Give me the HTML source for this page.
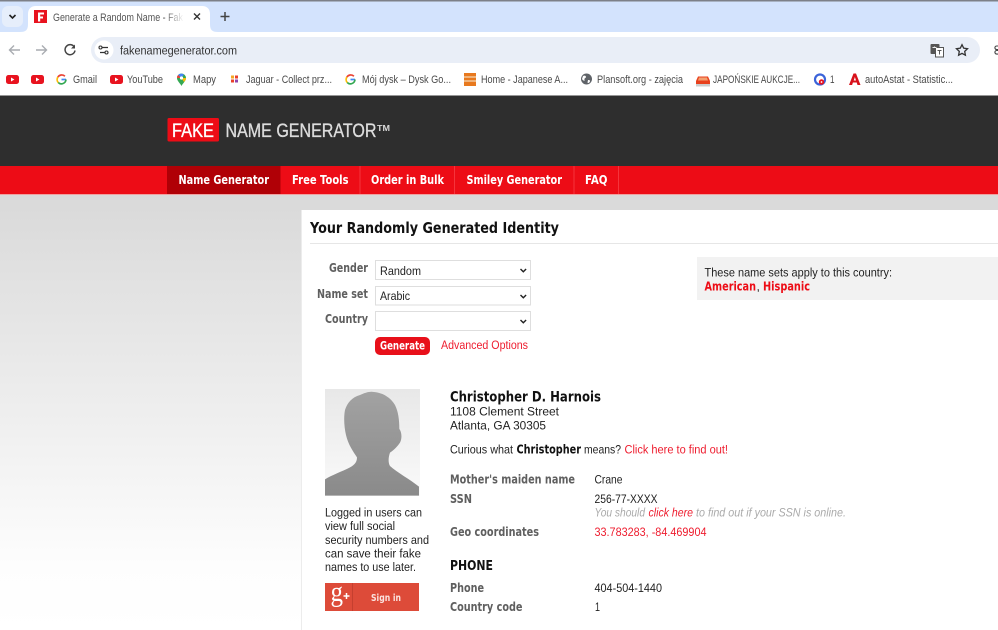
<!DOCTYPE html>
<html><head><meta charset="utf-8"><title>Fake Name Generator</title>
<style>
html,body{margin:0;padding:0;background:#fff;overflow:hidden}
svg{display:block}
text{font-family:"Liberation Sans",sans-serif;font-size:12.3px;fill:#222;white-space:pre}
.bm{font-size:10.600px;fill:#4a4a4a}
.nav{font-family:"DejaVu Sans",sans-serif;font-size:12px;font-weight:bold;fill:#fff}
.lb{font-family:"DejaVu Sans",sans-serif;font-size:12px;font-weight:bold;fill:#5f5f5f}
.v{font-size:12.300px;fill:#222}
.r{fill:#ee1c2e}
.b{font-family:"DejaVu Sans",sans-serif;font-size:12px;font-weight:bold}
.i{font-style:italic;font-size:11.500px;fill:#aaa}
.lg{font-family:"Liberation Sans",sans-serif;font-size:19.500px;stroke-width:.35px}
</style></head><body>
<svg width="998" height="630" viewBox="0 0 998 630" xmlns="http://www.w3.org/2000/svg">
<defs>
<linearGradient id="bg" x1="0" y1="0" x2="0" y2="1"><stop offset="0" stop-color="#d9d9d9"/><stop offset="0.85" stop-color="#fdfdfd"/><stop offset="1" stop-color="#fff"/></linearGradient>
<linearGradient id="ph" x1="0" y1="0" x2="0" y2="1"><stop offset="0" stop-color="#e8e8e8"/><stop offset="1" stop-color="#fafafa"/></linearGradient>
<linearGradient id="si" x1="0" y1="0" x2="0" y2="1"><stop offset="0" stop-color="#a2a2a2"/><stop offset="1" stop-color="#8a8a8a"/></linearGradient>
<linearGradient id="fade" x1="0" y1="0" x2="1" y2="0"><stop offset="0" stop-color="#fff" stop-opacity="0"/><stop offset="1" stop-color="#fff"/></linearGradient>
</defs>

<!-- browser chrome -->
<rect width="998" height="96" fill="#fff"/>
<rect width="998" height="32" fill="#d3e3fd"/>
<rect width="998" height="1.5" fill="#7d8088"/>
<rect x="2" y="6" width="21" height="21" rx="6" fill="#e6eefb"/>
<path d="M9.5 15l3 3 3-3" fill="none" stroke="#222" stroke-width="1.6"/>
<path d="M20 32c6 0 8-2 8-8V14c0-5 3-8 8-8h166c5 0 8 3 8 8v10c0 6 2 8 8 8z" fill="#fff"/>
<rect x="34" y="10" width="13" height="13" fill="#e8131f"/>
<path d="M38 12.5h6v2h-3.8v2H43v2h-2.8v3H38z" fill="#fff"/>
<text x="53" y="21" class="bm" textLength="130" lengthAdjust="spacingAndGlyphs" style="fill:#555">Generate a Random Name - Fak</text>
<rect x="165" y="9" width="19" height="16" fill="url(#fade)"/>
<path d="M194 13.5l6 6M200 13.5l-6 6" stroke="#333" stroke-width="1.4"/>
<path d="M225 12v9M220.500 16.500h9" stroke="#444" stroke-width="1.5"/>

<path d="M20 50h-10M14 45.500L9.500 50l4.500 4.500" fill="none" stroke="#a9acb1" stroke-width="1.400"/>
<path d="M36 50h10M42 45.500l4.500 4.500-4.500 4.500" fill="none" stroke="#a9acb1" stroke-width="1.400"/>
<path d="M74.300 47a5 5 0 1 0 .7 3.500" fill="none" stroke="#444" stroke-width="1.500"/>
<path d="M75 44.500v4h-4z" fill="#444"/>
<rect x="91" y="37" width="889" height="26" rx="13" fill="#e9eef7"/>
<circle cx="104" cy="50" r="9.500" fill="#fff"/>
<path d="M102 47.500h6M100 52.500h5" stroke="#333" stroke-width="1.300"/>
<circle cx="100.500" cy="47.500" r="1.500" fill="none" stroke="#333" stroke-width="1.100"/>
<circle cx="106.500" cy="52.500" r="1.500" fill="none" stroke="#333" stroke-width="1.100"/>
<text x="120" y="54.500" style="font-size:12.200px;fill:#333" textLength="117" lengthAdjust="spacingAndGlyphs">fakenamegenerator.com</text>
<!-- translate -->
<rect x="930.500" y="44" width="9" height="10" rx="1" fill="#555"/>
<rect x="935.500" y="47.500" width="8" height="9.500" fill="#fff" stroke="#555"/>
<path d="M932.500 47.500h4M934.500 46.500v1" stroke="#eee" stroke-width=".9"/>
<path d="M937.500 50.500h4M939.500 50.500v4" stroke="#555"/>
<path d="M962 44.700l1.700 3.500 3.800.5-2.800 2.700.7 3.800-3.400-1.800-3.400 1.800.7-3.800-2.800-2.700 3.800-.5z" fill="none" stroke="#333" stroke-width="1.300"/>
<path d="M998 46h-1.300a1.800 1.800 0 0 0 0 3.600H998M998 50.500h-1.300a1.800 1.800 0 0 0 0 3.600H998" fill="none" stroke="#444" stroke-width="1.100"/>

<!-- bookmarks -->
<g id="yt"><rect x="6" y="75" width="13" height="9" rx="2.500" fill="#e8131f"/><path d="M11 77.500v4l3.400-2z" fill="#fff"/></g>
<rect x="31" y="75" width="13" height="9" rx="2.500" fill="#e8131f"/><path d="M36 77.500v4l3.400-2z" fill="#fff"/>
<g fill="none" stroke-width="1.700">
<path d="M66 79.500h-4.500" stroke="#4285f4"/><path d="M66 79.500a4.600 4.600 0 0 1-7.800 3" stroke="#34a853"/><path d="M58.200 82.500a4.600 4.600 0 0 1-.3-5.500" stroke="#fbbc05"/><path d="M57.900 77a4.600 4.600 0 0 1 7-.8" stroke="#ea4335"/>
</g>
<text x="73" y="83" class="bm" textLength="24" lengthAdjust="spacingAndGlyphs">Gmail</text>
<rect x="110" y="75" width="13" height="9" rx="2.500" fill="#e8131f"/><path d="M115 77.500v4l3.400-2z" fill="#fff"/>
<text x="127" y="83" class="bm" textLength="36" lengthAdjust="spacingAndGlyphs">YouTube</text>
<path d="M181.500 73.500a4.500 4.500 0 0 0-4.500 4.500c0 3 3 5 4.500 8 1.500-3 4.500-5 4.500-8a4.500 4.500 0 0 0-4.500-4.500z" fill="#34a853"/>
<path d="M178 75a4.500 4.500 0 0 1 6-.5l-2.500 3.500z" fill="#4285f4"/><path d="M181.500 78l-4.500 0a4 4 0 0 1 1-3z" fill="#ea4335"/><path d="M181.500 78l4.500 0c0 1.500-1 3-2 4z" fill="#fbbc05"/>
<circle cx="181.500" cy="78" r="1.600" fill="#fff"/>
<text x="193" y="83" class="bm" textLength="23" lengthAdjust="spacingAndGlyphs">Mapy</text>
<rect x="231" y="75.500" width="3" height="3" fill="#f5a623"/><rect x="235" y="75.500" width="3" height="3" fill="#e8402a"/><rect x="231" y="79.500" width="3" height="3" fill="#e8402a"/><rect x="235" y="79.500" width="3" height="3" fill="#8e44ad"/>
<text x="246" y="83" class="bm" textLength="86" lengthAdjust="spacingAndGlyphs">Jaguar - Collect prz...</text>
<g fill="none" stroke-width="1.700" transform="translate(289 0)">
<path d="M66 79.500h-4.500" stroke="#4285f4"/><path d="M66 79.500a4.600 4.600 0 0 1-7.800 3" stroke="#34a853"/><path d="M58.200 82.500a4.600 4.600 0 0 1-.3-5.500" stroke="#fbbc05"/><path d="M57.900 77a4.600 4.600 0 0 1 7-.8" stroke="#ea4335"/>
</g>
<text x="362" y="83" class="bm" textLength="89" lengthAdjust="spacingAndGlyphs">Mój dysk – Dysk Go...</text>
<rect x="464" y="73" width="12" height="13" fill="#e8791e"/><path d="M464 77h12M464 81h12" stroke="#f4d7b5" stroke-width="1.200"/>
<text x="481" y="83" class="bm" textLength="87" lengthAdjust="spacingAndGlyphs">Home - Japanese A...</text>
<circle cx="586.500" cy="79" r="5.500" fill="#5f6368"/><path d="M583 76c2-1 3 0 3 1s-2 1-1.500 3-2 0-2.500-1zM588 80c1 0 2 0 2 1s-1 2-2 2 0-2 0-3z" fill="#fff"/>
<text x="597" y="83" class="bm" textLength="86" lengthAdjust="spacingAndGlyphs">Plansoft.org - zajęcia</text>
<path d="M696 85v-4l2-4.500h10l2 4.500v4z" fill="#e8401c"/><rect x="696" y="84" width="14" height="2.500" fill="#ccc"/><path d="M699 77.500h8l1 3h-10z" fill="#f3a070"/>
<text x="713" y="83" class="bm" textLength="87" lengthAdjust="spacingAndGlyphs">JAPOŃSKIE AUKCJE...</text>
<circle cx="820" cy="79.500" r="5" fill="none" stroke="#3b63d9" stroke-width="2.200"/><circle cx="821.500" cy="82" r="2.700" fill="#e8131f"/><circle cx="821.500" cy="82" r=".9" fill="#fff"/>
<text x="830" y="83" class="bm" textLength="4.500" lengthAdjust="spacingAndGlyphs">1</text>
<path d="M849 85l4.500-11.500h2.500l4.500 11.500h-3l-.8-2.500h-3.800l-.8 2.500zM853.700 80.500h2.300l-1.100-3.500z" fill="#d8121c" fill-rule="evenodd"/>
<text x="865" y="83" class="bm" textLength="88" lengthAdjust="spacingAndGlyphs">autoAstat - Statistic...</text>

<!-- site header -->
<rect y="95.500" width="998" height="70.500" fill="#2e2e2e"/>
<rect x="167.500" y="118" width="51.500" height="23.500" rx="1.500" fill="#ed0c16"/>
<text x="172" y="137" class="lg" style="fill:#fff;stroke:#fff" textLength="42" lengthAdjust="spacingAndGlyphs">FAKE</text>
<text x="225.500" y="137" class="lg" style="fill:#dcdcdc;stroke:#dcdcdc" textLength="151" lengthAdjust="spacingAndGlyphs">NAME GENERATOR</text>
<text x="377" y="131" style="font-size:8px;fill:#dcdcdc;font-weight:bold" textLength="13" lengthAdjust="spacingAndGlyphs">TM</text>

<!-- nav -->
<rect y="166" width="998" height="28" fill="#ed0c16"/>
<rect y="194" width="998" height="1" fill="#f0a0a0"/>
<rect x="167" y="166" width="113.500" height="28" fill="#b00006"/>
<path d="M360 166v28M454.500 166v28M574 166v28M618.500 166v28" stroke="#f5343c" stroke-width="1"/>
<text x="178.500" y="184" class="nav" textLength="90.500" lengthAdjust="spacingAndGlyphs">Name Generator</text>
<text x="292" y="184" class="nav" textLength="56.500" lengthAdjust="spacingAndGlyphs">Free Tools</text>
<text x="371" y="184" class="nav" textLength="73" lengthAdjust="spacingAndGlyphs">Order in Bulk</text>
<text x="466.500" y="184" class="nav" textLength="95.500" lengthAdjust="spacingAndGlyphs">Smiley Generator</text>
<text x="585" y="184" class="nav" textLength="22.500" lengthAdjust="spacingAndGlyphs">FAQ</text>

<!-- page background -->
<rect y="195" width="998" height="435" fill="url(#bg)"/>
<rect x="301" y="210" width="1" height="420" fill="#ececec"/>
<rect x="302" y="210" width="696" height="420" fill="#fff"/>
<text x="310" y="233" class="b" style="font-size:15px;fill:#111" textLength="249" lengthAdjust="spacingAndGlyphs">Your Randomly Generated Identity</text>
<rect x="310" y="243" width="688" height="1" fill="#e6e6e6"/>

<!-- form -->
<text x="329" y="272" class="lb" textLength="39" lengthAdjust="spacingAndGlyphs">Gender</text>
<text x="317" y="298" class="lb" textLength="51" lengthAdjust="spacingAndGlyphs">Name set</text>
<text x="325" y="323" class="lb" textLength="43" lengthAdjust="spacingAndGlyphs">Country</text>
<g fill="#fff" stroke="#dedede">
<rect x="375.500" y="260.500" width="155" height="19"/>
<rect x="375.500" y="286.500" width="155" height="18.500"/>
<rect x="375.500" y="311.500" width="155" height="19"/>
</g>
<text x="380" y="275" class="v" textLength="41" lengthAdjust="spacingAndGlyphs">Random</text>
<text x="380" y="300" class="v" textLength="30" lengthAdjust="spacingAndGlyphs">Arabic</text>
<path d="M520.500 269l2.800 2.800 2.800-2.800M520.500 295l2.800 2.800 2.800-2.800M520.500 320l2.800 2.800 2.800-2.800" fill="none" stroke="#222" stroke-width="1.400"/>
<rect x="375" y="337" width="55" height="18" rx="5" fill="#e8101a"/>
<text x="380" y="349.500" class="b" style="font-size:11.500px;fill:#fff" textLength="45" lengthAdjust="spacingAndGlyphs">Generate</text>
<text x="441" y="349" class="r" textLength="87" lengthAdjust="spacingAndGlyphs">Advanced Options</text>

<!-- info box -->
<rect x="697" y="257" width="301" height="43" fill="#f2f2f2"/>
<text x="704.500" y="276.500" class="v" textLength="187.500" lengthAdjust="spacingAndGlyphs">These name sets apply to this country:</text>
<text x="704.500" y="290.500" class="b" style="fill:#ed0c16" textLength="51.500" lengthAdjust="spacingAndGlyphs">American</text>
<text x="756.500" y="290.500" class="v">,</text>
<text x="763" y="290.500" class="b" style="fill:#ed0c16" textLength="47" lengthAdjust="spacingAndGlyphs">Hispanic</text>

<!-- avatar -->
<rect x="325" y="389" width="95" height="107" fill="url(#ph)"/>
<g transform="translate(310 380) scale(.3333)">
<path d="M45 347V298C65 285 95 275 120 262C135 254 141 245 141 232C130 215 115 195 108 165C102 140 101 110 105 90C112 68 126 52 150 45C165 38 180 33 192 36C215 38 240 50 255 75C265 95 268 120 268 147C275 155 277 175 270 188C262 200 250 212 240 218C235 232 234 248 240 258C262 278 300 298 327 320V347z" fill="url(#si)"/>
</g>
<text x="325" y="516.500" class="v" textLength="97" lengthAdjust="spacingAndGlyphs">Logged in users can</text>
<text x="325" y="530" class="v" textLength="70" lengthAdjust="spacingAndGlyphs">view full social</text>
<text x="325" y="544" class="v" textLength="104" lengthAdjust="spacingAndGlyphs">security numbers and</text>
<text x="325" y="557.500" class="v" textLength="96" lengthAdjust="spacingAndGlyphs">can save their fake</text>
<text x="325" y="571" class="v" textLength="91" lengthAdjust="spacingAndGlyphs">names to use later.</text>
<rect x="325" y="583" width="94" height="28" fill="#dd4b39"/>
<rect x="352" y="583" width="1" height="28" fill="#c53f2f"/>
<text x="330.500" y="601" style="font-family:'Liberation Serif',serif;font-size:28px;fill:#fff" textLength="12.500" lengthAdjust="spacingAndGlyphs">g</text>
<path d="M343.500 596h6M346.500 593v6" stroke="#fff" stroke-width="1.500"/>
<text x="371" y="601" class="b" style="font-size:10px;fill:#fbe3df" textLength="30" lengthAdjust="spacingAndGlyphs">Sign in</text>

<!-- details -->
<text x="450" y="401.500" class="b" style="font-size:14px;fill:#111" textLength="151" lengthAdjust="spacingAndGlyphs">Christopher D. Harnois</text>
<text x="450" y="415.500" class="v" textLength="109" lengthAdjust="spacingAndGlyphs">1108 Clement Street</text>
<text x="450" y="429.500" class="v" textLength="96" lengthAdjust="spacingAndGlyphs">Atlanta, GA 30305</text>
<text x="450" y="453.500" class="v" textLength="63" lengthAdjust="spacingAndGlyphs">Curious what</text>
<text x="516.500" y="453.500" class="b" style="fill:#111" textLength="64.500" lengthAdjust="spacingAndGlyphs">Christopher</text>
<text x="584" y="453.500" class="v" textLength="37" lengthAdjust="spacingAndGlyphs">means?</text>
<text x="624.500" y="453.500" class="r" textLength="103.500" lengthAdjust="spacingAndGlyphs">Click here to find out!</text>

<text x="450" y="483.500" class="lb" textLength="125" lengthAdjust="spacingAndGlyphs">Mother's maiden name</text>
<text x="594.500" y="483.500" class="v" textLength="28" lengthAdjust="spacingAndGlyphs">Crane</text>
<text x="450" y="503" class="lb" textLength="22" lengthAdjust="spacingAndGlyphs">SSN</text>
<text x="594.500" y="503" class="v" textLength="63" lengthAdjust="spacingAndGlyphs">256-77-XXXX</text>
<text x="594.500" y="516.500" class="i" textLength="50.500" lengthAdjust="spacingAndGlyphs">You should</text>
<text x="648.500" y="516.500" class="i" style="fill:#ee1c2e" textLength="44.500" lengthAdjust="spacingAndGlyphs">click here</text>
<text x="696" y="516.500" class="i" textLength="150" lengthAdjust="spacingAndGlyphs">to find out if your SSN is online.</text>
<text x="450" y="536" class="lb" textLength="89" lengthAdjust="spacingAndGlyphs">Geo coordinates</text>
<text x="594.500" y="536" class="r" textLength="112" lengthAdjust="spacingAndGlyphs">33.783283, -84.469904</text>
<text x="450" y="570" class="b" style="font-size:13px;fill:#111" textLength="43" lengthAdjust="spacingAndGlyphs">PHONE</text>
<text x="450" y="592" class="lb" textLength="34" lengthAdjust="spacingAndGlyphs">Phone</text>
<text x="594.500" y="592" class="v" textLength="67.500" lengthAdjust="spacingAndGlyphs">404-504-1440</text>
<text x="450" y="611" class="lb" textLength="72.500" lengthAdjust="spacingAndGlyphs">Country code</text>
<text x="595" y="611" class="v" textLength="5" lengthAdjust="spacingAndGlyphs">1</text>
</svg>
</body></html>
